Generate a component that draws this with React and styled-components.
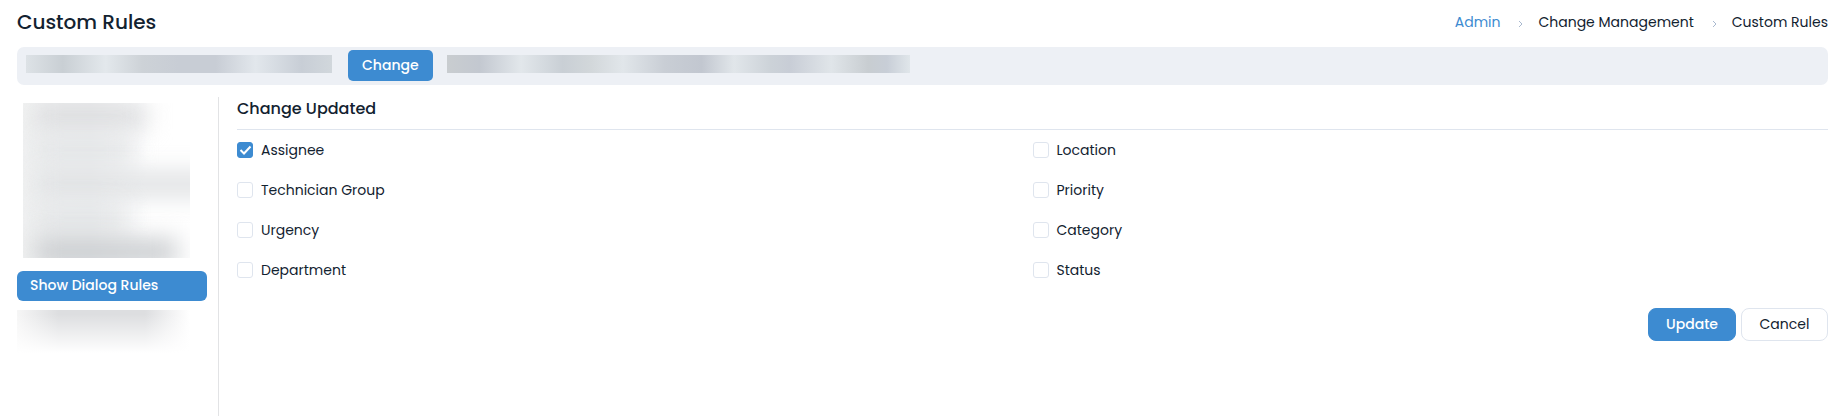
import React from "react";
import styled, { createGlobalStyle } from "styled-components";

//* Styles
const primaryColor = "#3d8bd1";
const textColor = "#122230";
const lineColor = "#dfe5ee";
const barColor = "#edf0f5";

//* Data
const fields = [
  "Assignee",
  "Location",
  "Technician Group",
  "Priority",
  "Urgency",
  "Category",
  "Department",
  "Status",
];

const leadStops =
  "#dde2e6 0, #c9cfd4 12%, #e3e8ec 26%, #cdd2d7 38%, #c8cdd5 50%, #c8cdd5 62%, #e2e7ec 75%, #c8ced6 90%, #d1d7dc 100%";
const tailStops =
  "#c9cdd0 0, #c3c8d0 7%, #e2e7eb 16%, #c9cfd5 25%, #d2d7da 31%, #e1e6ea 38%, #c9ced5 47%, #c2c7d0 55%, #e1e6ea 62%, #ccd2d8 70%, #c8cdd6 74%, #e0e5e9 83%, #c8cdd1 91%, #c8ced7 95%, #e0e6ea 100%";

function App() {
  const [checked, setChecked] = React.useState(["Assignee"]);

  const toggle = (field) => {
    setChecked((prev) =>
      prev.includes(field) ? prev.filter((f) => f !== field) : [...prev, field]
    );
  };

  return (
    <Page>
      <GlobalStyle />
      <Header>
        <Title>Custom Rules</Title>
        <Breadcrumb aria-label="Breadcrumb">
          <CrumbLink href="#admin">Admin</CrumbLink>
          <Separator />
          <span>Change Management</span>
          <Separator />
          <span>Custom Rules</span>
        </Breadcrumb>
      </Header>

      <ModuleBar>
        <HiddenTabs $width={306} $stops={leadStops} />
        <ModuleTab type="button">Change</ModuleTab>
        <HiddenTabs $width={463} $stops={tailStops} />
      </ModuleBar>

      <Content>
        <Sidebar>
          <HiddenMenu>
            <HiddenItem $width={112} $tone="#dcdddf" />
            <HiddenItem $width={98} $tone="#e4e6e8" />
            <HiddenItem $width={190} $tone="#e0e2e4" />
            <HiddenItem $width={90} $tone="#e4e6e8" />
            <HiddenItem $width={142} $tone="#c8cbce" />
          </HiddenMenu>
          <MenuButton type="button">Show Dialog Rules</MenuButton>
          <HiddenLast />
        </Sidebar>

        <Main>
          <SectionTitle>Change Updated</SectionTitle>
          <Fields>
            {fields.map((field) => (
              <Field key={field}>
                <Checkbox
                  checked={checked.includes(field)}
                  onChange={() => toggle(field)}
                />
                {field}
              </Field>
            ))}
          </Fields>
          <Actions>
            <UpdateButton type="button">Update</UpdateButton>
            <CancelButton type="button">Cancel</CancelButton>
          </Actions>
        </Main>
      </Content>
    </Page>
  );
}

function Separator() {
  return (
    <Chevron viewBox="0 0 5 8" aria-hidden="true">
      <path d="M1 1l3 3-3 3" />
    </Chevron>
  );
}

function Checkbox({ checked, onChange }) {
  return (
    <CheckWrap>
      <CheckInput type="checkbox" checked={checked} onChange={onChange} />
      {checked && (
        <CheckMark viewBox="0 0 16 16" aria-hidden="true">
          <path d="M3.500 8l3.500 3.500 6.500-7" />
        </CheckMark>
      )}
    </CheckWrap>
  );
}

export default App;

const GlobalStyle = createGlobalStyle`
  * {
    box-sizing: border-box;
  }

  body {
    margin: 0;
    background: white;
    color: ${textColor};
    font-family: Poppins, Inter, sans-serif;
    font-size: 14px;
    line-height: 20px;
  }

  button {
    font: inherit;
    cursor: pointer;
  }
`;

const Page = styled.div`
  display: flex;
  flex-direction: column;
  min-height: 100vh;
  padding: 0 14px 0 17px;
`;

const Header = styled.header`
  display: flex;
  align-items: center;
  justify-content: space-between;
  padding: 8px 0 11px;
`;

const Title = styled.h1`
  margin: 0;
  font-size: 20px;
  line-height: 28px;
  font-weight: 500;
`;

const Breadcrumb = styled.nav`
  display: flex;
  align-items: center;
  gap: 15px;
`;

const CrumbLink = styled.a`
  color: ${primaryColor};
  text-decoration: none;
`;

const Chevron = styled.svg`
  width: 5px;
  height: 8px;
  margin: 4px 0 0 3px;
  fill: none;
  stroke: #a9b9cf;
`;

const ModuleBar = styled.div`
  display: flex;
  align-items: flex-start;
  padding: 3px 9px 4px;
  border-radius: 7px;
  background: ${barColor};
`;

const HiddenTabs = styled.div`
  width: ${({ $width }) => $width}px;
  height: 18px;
  margin-top: 5px;
  background: linear-gradient(to right, ${({ $stops }) => $stops});
`;

const ModuleTab = styled.button`
  height: 31px;
  margin: 0 14px 0 16px;
  padding: 0 14px 2px;
  border: none;
  border-radius: 5px;
  background: ${primaryColor};
  color: white;
  && {
    font-weight: 500;
  }
`;

const Content = styled.div`
  display: flex;
  flex: 1;
  padding-top: 12px;
`;

const Sidebar = styled.aside`
  display: flex;
  flex-direction: column;
  width: 202px;
  padding: 6px 11px 0 0;
  border-right: 1px solid #e2e3e5;
`;

const HiddenMenu = styled.div`
  display: flex;
  flex-direction: column;
  gap: 8px;
  width: 167px;
  height: 155px;
  margin-left: 6px;
  overflow: hidden;
  background: linear-gradient(to right, #f1f2f2, #eeeff0 40%, white 75%);
`;

const HiddenItem = styled.div`
  flex: none;
  width: ${({ $width }) => $width}px;
  height: 26px;
  margin-left: 12px;
  background: ${({ $tone }) => $tone};
  filter: blur(12px);
`;

const MenuButton = styled.button`
  height: 30px;
  margin: 13px 0 9px;
  padding: 0 13px 2px;
  border: none;
  border-radius: 6px;
  background: ${primaryColor};
  color: white;
  text-align: left;
  && {
    font-weight: 500;
  }
`;

const HiddenLast = styled.div`
  width: 173px;
  height: 43px;
  background: linear-gradient(to bottom, transparent 10%, white),
    linear-gradient(
      to right,
      #f6f6f6,
      #dddee0 24%,
      #dddee0 74%,
      #f3f3f4 90%,
      white
    );
`;

const Main = styled.main`
  flex: 1;
  padding-left: 18px;
`;

const SectionTitle = styled.h2`
  margin: 0;
  padding-bottom: 9px;
  border-bottom: 1px solid ${lineColor};
  font-size: 16px;
  line-height: 23px;
  font-weight: 500;
`;

const Fields = styled.div`
  display: grid;
  grid-template-columns: 1fr 1fr;
  row-gap: 20px;
  padding-top: 10px;
`;

const Field = styled.label`
  display: flex;
  align-items: center;
  gap: 8px;
`;

const CheckWrap = styled.span`
  display: grid;
  width: 16px;
  height: 16px;

  > * {
    grid-area: 1 / 1;
  }
`;

const CheckInput = styled.input`
  appearance: none;
  width: 16px;
  height: 16px;
  margin: 0;
  border: 1px solid ${lineColor};
  border-radius: 3px;
  background: white;

  &:checked {
    border-color: ${primaryColor};
    background: ${primaryColor};
  }
`;

const CheckMark = styled.svg`
  width: 16px;
  height: 16px;
  fill: none;
  stroke: white;
  stroke-width: 2;
  pointer-events: none;
`;

const Actions = styled.div`
  display: flex;
  justify-content: flex-end;
  gap: 5px;
  padding-top: 28px;
`;

const UpdateButton = styled.button`
  height: 33px;
  min-width: 88px;
  padding-bottom: 2px;
  border: 1px solid ${primaryColor};
  border-radius: 8px;
  background: ${primaryColor};
  color: white;
  && {
    font-weight: 500;
  }
`;

const CancelButton = styled(UpdateButton)`
  min-width: 87px;
  border-color: ${lineColor};
  background: white;
  color: ${textColor};
  && {
    font-weight: 400;
  }
`;
